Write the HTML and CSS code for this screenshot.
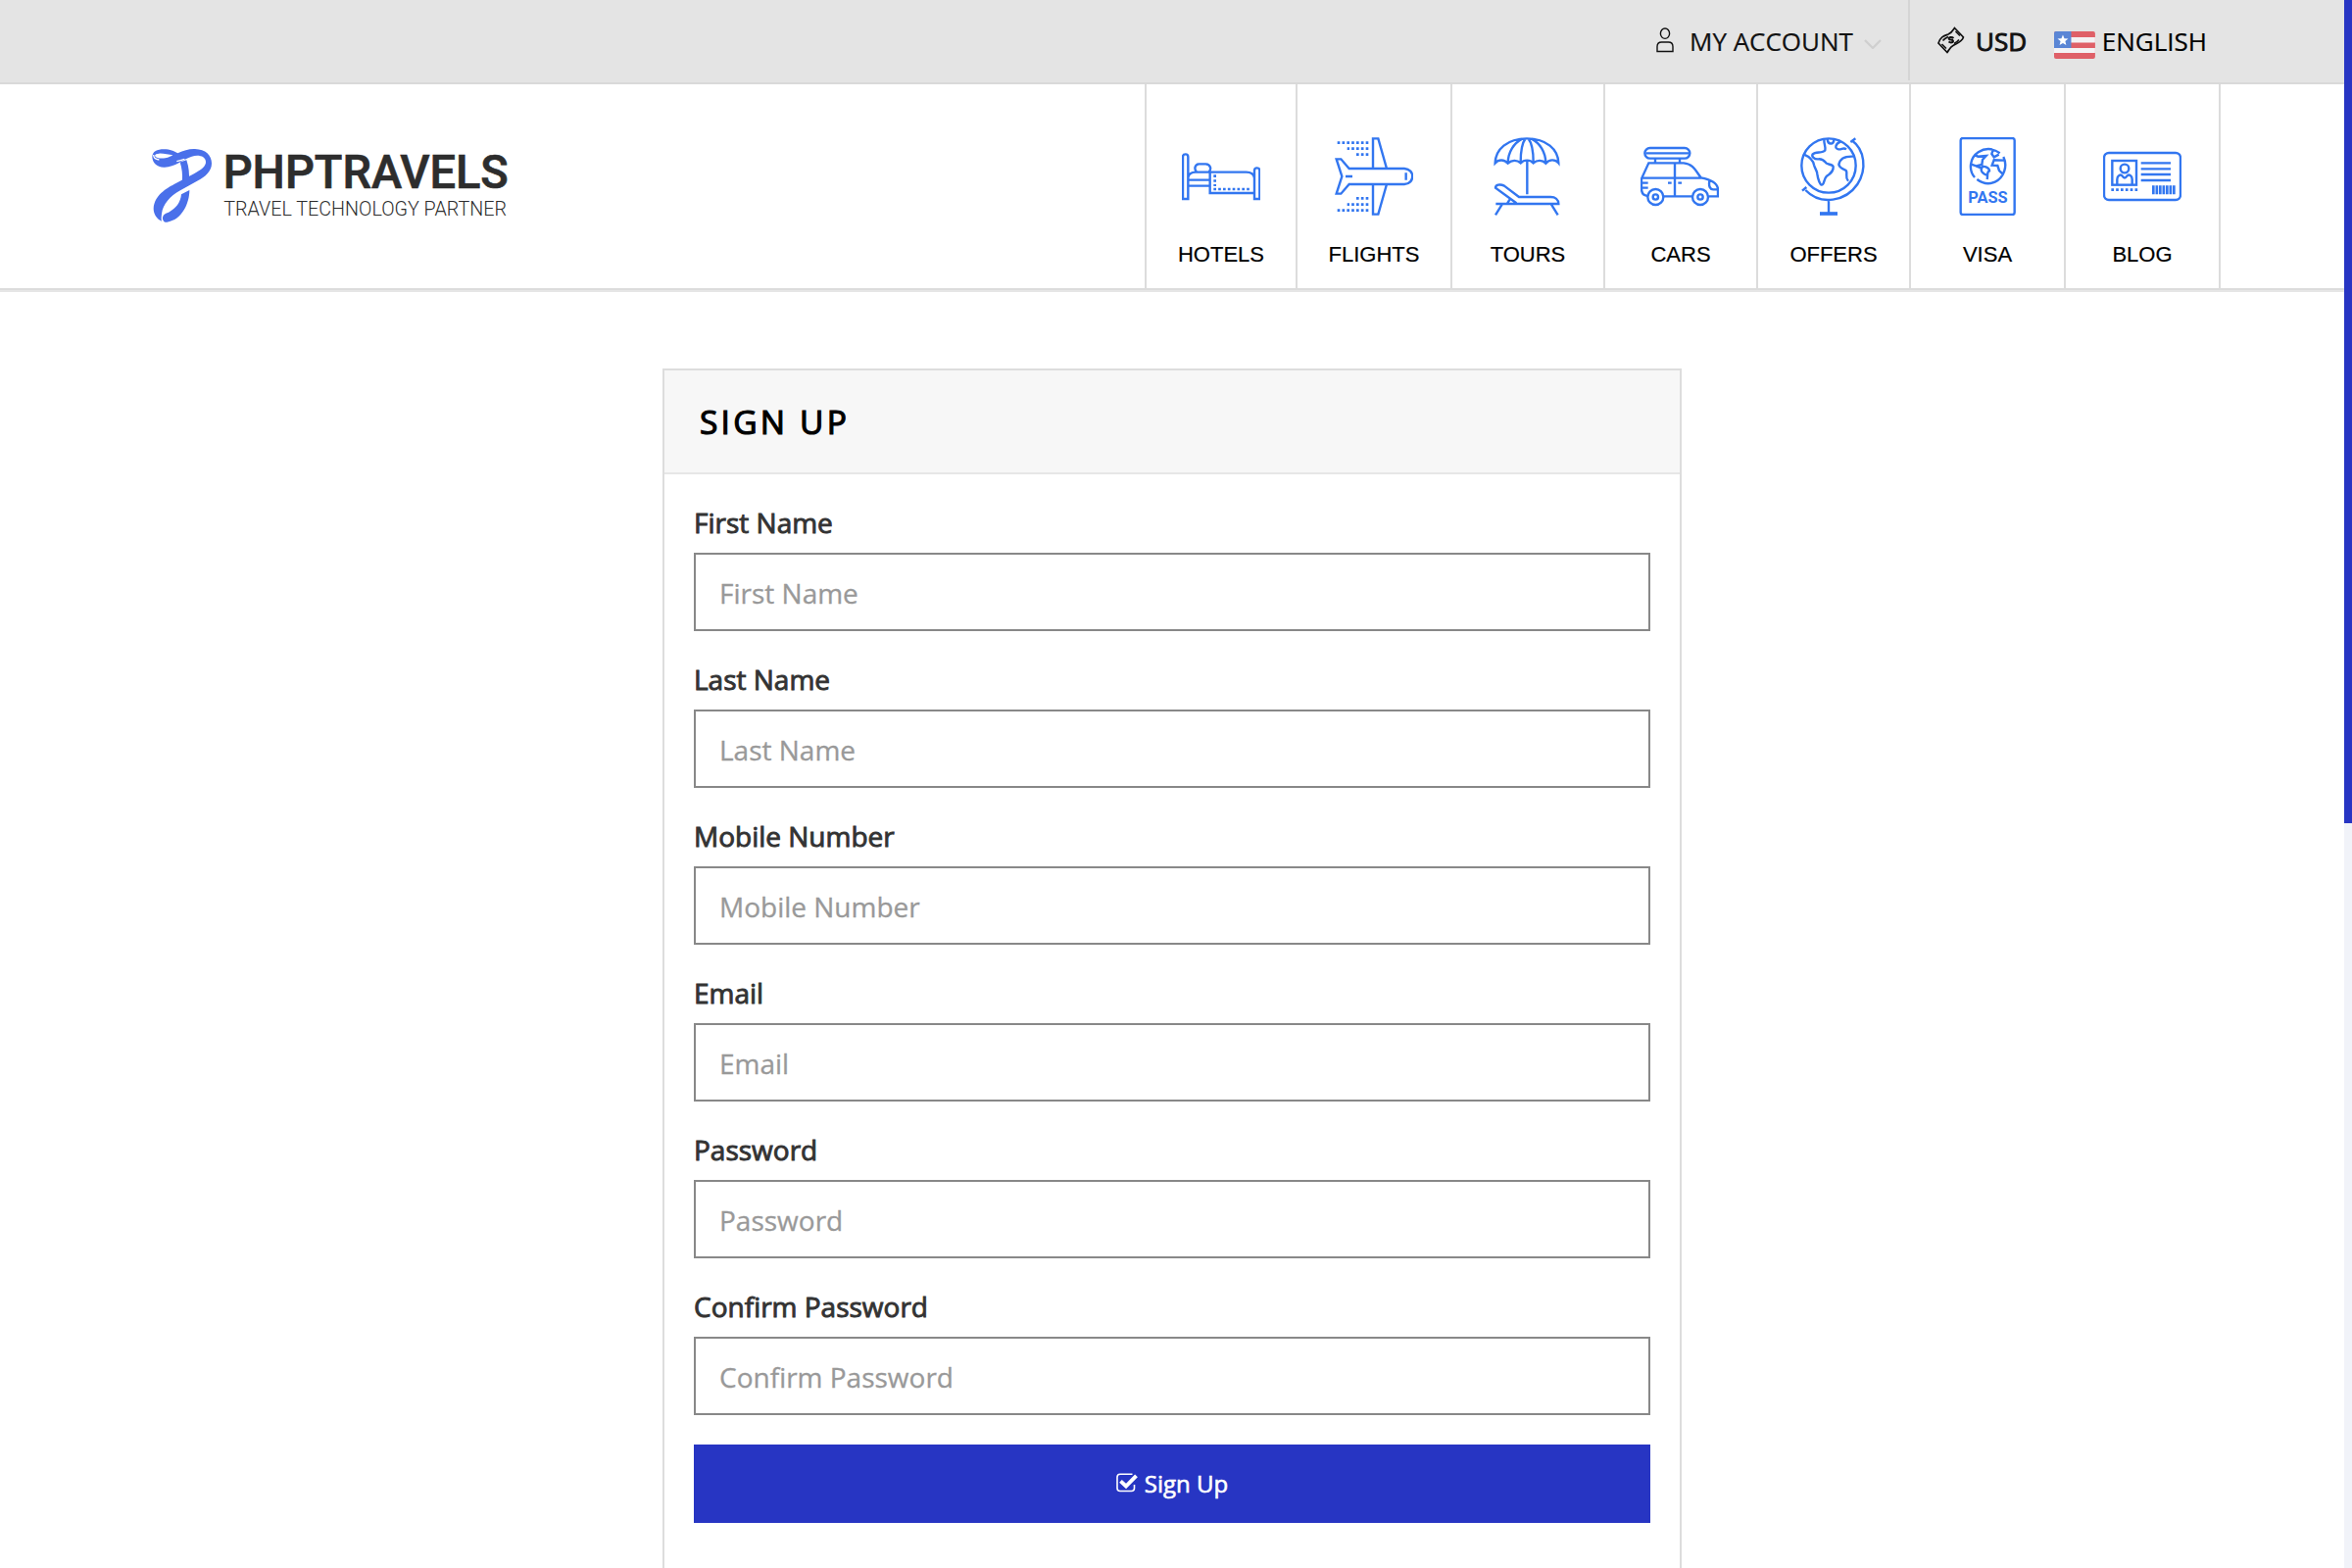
FILE: index.html
```html
<!DOCTYPE html>
<html lang="en">
<head>
<meta charset="utf-8">
<title>Sign Up - PHPTRAVELS</title>
<link rel="stylesheet" href="styles.css">
</head>
<body>
<div class="page">
  <div class="content">
    <div class="topbar">
      <a class="account">
        <svg class="icon-user" viewBox="0 0 18 26"><ellipse cx="9" cy="6.200" rx="4.600" ry="5.200"/><path d="M1 24.500v-5c0-3.200 1.500-4.500 4.500-4.500h7c3 0 4.500 1.300 4.500 4.500v5z"/></svg>
        <span>MY ACCOUNT</span>
        <svg class="icon-caret" viewBox="0 0 18 10"><path d="M1 1l8 8 8-8"/></svg>
      </a>
      <div class="locale">
        <svg class="icon-money" viewBox="0 0 28 28"><path d="M1 17C3 10.500 7 9.500 11 8C14.500 6.500 15.500 4.500 17.500 1.500L26.500 11C25 16 20 17 16 19.500C13 21 12 24 10 26.500Z"/><path d="M18.500 5L23 9.500M4.500 18L9 22.500M5.500 14.500C7 12.500 9 11.500 11 10.500M17 17.500C19 16.500 20.500 15.500 22 13.500" stroke-width="1.500"/><path d="M16.500 12C14.500 10 11 11 11.800 12.800C12.600 14.300 15.500 12.800 16 14.700C16.300 16.500 13.500 17 11.500 15.500" stroke-width="2"/></svg>
        <span class="currency">USD</span>
        <svg class="flag" viewBox="0 0 42 28"><rect width="42" height="28" rx="2" fill="#df6068"/><path fill="#f4f2f4" d="M17 6h25v5.500H17zM0 17h42v5H0z"/><path fill="#5b86d5" d="M2 0h15.500v17H0V2a2 2 0 0 1 2-2z"/><path fill="#fff" d="M9 3.500l1.500 3.800 4 .2-3.100 2.600 1 4L9 11.900l-3.400 2.200 1-4-3.100-2.600 4-.2z"/></svg>
        <span class="language">ENGLISH</span>
      </div>
    </div>

    <header class="header">
      <svg class="logo" viewBox="75 60 1110 240">
        <g fill="none" stroke="#4a70ea" stroke-linejoin="round">
          <path stroke-width="21" d="M171 103C178 124 180 142 178 166"/>
          <path stroke="none" fill="#4a70ea" d="M76 91C76 73 92 67 111 67C132 67 142 73 154 79C173 70 190 65 207 66C239 67 258 85 258 110C258 134 238 151 216 163L162 193C130 211 109 235 105 264C104 275 103 282 105 287C91 281 80 266 80 248C83 208 118 188 143 174L204 142C225 130 241 119 240 105C239 88 218 83 197 89C171 96 145 122 114 122C90 123 77 109 76 91ZM84 87C88 94 102 96 116 94C126 92 136 88 139 85C127 84 109 79 97 80C90 80 85 82 84 87Z"/>
          <path stroke="none" fill="#4a70ea" d="M190 192C190 231 168 283 121 290C112 291 107 284 108 275C110 266 117 263 126 260C148 249 163 230 165 205Z"/>
          <path stroke="#fff" stroke-width="4" d="M151 104Q162 101 175 97M80 84C80 93 87 98 97 99"/>
        </g>
        <text class="logo-name" x="293" y="187" textLength="873" lengthAdjust="spacingAndGlyphs">PHPTRAVELS</text>
        <text class="logo-tag" x="295" y="269" textLength="866" lengthAdjust="spacingAndGlyphs">TRAVEL TECHNOLOGY PARTNER</text>
      </svg>
      <nav class="nav">
        <a class="nav-item w-hotels">
          <svg class="nav-icon" viewBox="138 180 240 240"><path d="M141 369V240q0-8 8-8t8 8V369zM360 369V282q0-8 8-8t8 8V369zM157 311H224M157 329H224M157 304C159 292 168 287 180 287H335C350 287 358 293 360 305M224 287V351H360M183 286C175 278 177 263 190 262H211C227 263 229 279 220 287"/><path class="dots" d="M239 295V330M235 339H350"/></svg>
          <span>HOTELS</span>
        </a>
        <a class="nav-item w-flights">
          <svg class="nav-icon" viewBox="606 180 240 240"><path d="M650 276H819C852 278 852 322 819 324H650L625 353H611L628 300L611 247H625ZM723 276V184H739L765 276M723 324V416H739L765 324M824 289V311M639 300H660"/><path class="dots" d="M709 197H614M709 215H644M709 233H672M709 367H672M709 386H644M709 404H614"/></svg>
          <span>FLIGHTS</span>
        </a>
        <a class="nav-item w-mid">
          <svg class="nav-icon" viewBox="114 180 240 240"><path d="M137 259C138 217 174 184 234 184S330 217 331 259C321 247 303 247 292 260C282 249 265 249 254 259C244 248 225 248 215 259C204 249 188 249 176 260C165 248 148 247 137 259ZM176 258C177 226 194 198 220 185M215 257C215 222 221 196 230 184M238 184C248 196 254 222 254 257M248 185C274 198 291 226 292 258M235 252V355M139 384H331C331 371 321 363 307 363H210L165 329C151 322 138 326 138 335L202 382M174 383L182 370M158 386L138 418M309 386L329 418"/></svg>
          <span>TOURS</span>
        </a>
        <a class="nav-item w-mid">
          <svg class="nav-icon" viewBox="582 180 240 240"><rect x="595" y="213" width="138" height="32" rx="16"/><path d="M598 229H730M627 246V258M702 246V258M605 360C590 359 585 351 585 338V307L607 259H714C741 261 750 281 767 304C794 309 816 317 819 338V361H790M652 361H742M588 305H767M687 260V361M587 320H605M587 335H605M793 314C790 330 795 341 806 340H819M666 320H677M697 320H708"/><circle cx="628" cy="363" r="24"/><circle cx="628" cy="363" r="8"/><circle cx="765" cy="363" r="24"/><circle cx="765" cy="363" r="8"/></svg>
          <span>CARS</span>
        </a>
        <a class="nav-item w-mid">
          <svg class="nav-icon" viewBox="90 180 240 240"><circle cx="198" cy="267" r="83"/><path d="M265 195L280 184M269 190C308 218 316 278 286 324C251 376 174 391 127 342M117 344L130 333M198 373V412"/><path stroke-width="11" d="M171 414H225"/><path d="M121 232C140 240 150 249 153 265C156 277 162 280 163 293C165 309 172 326 177 326C184 326 183 308 192 299C207 290 213 280 212 270C210 263 196 264 190 259C184 252 180 246 167 247C153 248 145 239 149 232C158 223 180 230 187 220C190 209 183 204 184 187M194 186C196 204 213 204 214 187M235 193C218 200 215 215 228 217C239 218 243 210 252 217M273 239C250 238 232 245 229 264C233 278 245 276 252 283C256 294 247 301 258 314"/></svg>
          <span>OFFERS</span>
        </a>
        <a class="nav-item w-flights">
          <svg class="nav-icon" viewBox="564 180 240 240"><rect x="602" y="183" width="165" height="234" rx="7"/><path d="M645 303C625 280 630 243 656 226C681 210 704 216 722 229M733 240C747 269 734 304 707 317C689 325 668 321 652 309M646 235L655 239L680 237L669 249L667 264L649 268L632 262M649 268L666 275C670 263 690 274 690 283C681 286 686 295 683 309M666 275C662 285 672 292 682 296M701 219L697 231L704 241L719 233M735 251L704 250L698 266L715 267L720 282L731 293"/><text class="pass" x="625" y="381" textLength="121" lengthAdjust="spacingAndGlyphs">PASS</text></svg>
          <span>VISA</span>
        </a>
        <a class="nav-item w-blog">
          <svg class="nav-icon" viewBox="198 180 240 240"><rect x="201" y="228" width="234" height="144" rx="15"/><rect x="226" y="252" width="74" height="74"/><circle cx="264" cy="276" r="13"/><path d="M241 325V309C241 297 252 292 257 299Q264 310 271 299C277 292 287 298 287 309V325M314 259H405M314 277H405M314 294H405M314 312H405"/><path class="dots" d="M223 341H304"/><path class="bars" d="M348 341H419"/></svg>
          <span>BLOG</span>
        </a>
      </nav>
    </header>

    <main class="panel">
      <h1 class="panel-title">SIGN UP</h1>
      <form class="panel-body">
        <div class="field"><label for="first">First Name</label><input id="first" type="text" placeholder="First Name"></div>
        <div class="field"><label for="last">Last Name</label><input id="last" type="text" placeholder="Last Name"></div>
        <div class="field"><label for="mobile">Mobile Number</label><input id="mobile" type="text" placeholder="Mobile Number"></div>
        <div class="field"><label for="email">Email</label><input id="email" type="text" placeholder="Email"></div>
        <div class="field"><label for="password">Password</label><input id="password" type="password" placeholder="Password"></div>
        <div class="field"><label for="confirm">Confirm Password</label><input id="confirm" type="password" placeholder="Confirm Password"></div>
        <button class="submit" type="button">
          <svg class="icon-check" viewBox="0 0 22 20"><path stroke-width="1.600" d="M16.500 1.300H4A3 3 0 0 0 1 4.300V15.500a3 3 0 0 0 3 3H15.500a3 3 0 0 0 3-3V12"/><path stroke-width="3.900" d="M4.500 8.300L10 13.500 20.500 2.800"/></svg>
          <span>Sign Up</span>
        </button>
      </form>
    </main>
  </div>
  <div class="scroll-track"><div class="scroll-thumb"></div></div>
</div>
</body>
</html>
```

FILE: styles.css
```css
* { box-sizing: border-box; }

body {
  margin: 0;
  background: #fff;
  font-family: "Open Sans", sans-serif;
  color: #000;
}

.page {
  display: flex;
  height: 100vh;
  overflow: hidden;
}

.content {
  flex: 1;
  overflow: hidden;
}

.scroll-track {
  width: 8px;
  background: #f1f3f9;
}

.scroll-thumb {
  height: 840px;
  background: #2735c3;
}

.topbar {
  display: flex;
  justify-content: flex-end;
  height: 86px;
  padding-right: 140px;
  background: #e4e4e4;
  border-bottom: 2px solid #d9d9d9;
  font-size: 26px;
}

.account,
.locale {
  display: flex;
  align-items: center;
  height: 82px;
  white-space: nowrap;
}

.account span,
.locale span {
  padding-top: 2px;
  -webkit-text-stroke: 0.2px currentColor;
}

.account {
  width: 259px;
  border-right: 2px solid #d5d5d5;
  color: #111;
}

.account svg,
.icon-money,
.icon-check {
  fill: none;
  stroke: #111;
  stroke-width: 1.7;
}

.account .icon-user {
  width: 18px;
  height: 26px;
  margin-right: 16px;
  stroke-width: 1.4;
}

.account .icon-caret {
  width: 18px;
  height: 10px;
  margin: 8px 0 0 11px;
  stroke: #cfcfcf;
  stroke-width: 2.2;
}

.locale { width: 303px; padding-left: 28px; }

.icon-money {
  width: 28px;
  height: 28px;
  margin-right: 11px;
}

.locale .currency {
  width: 52px;
  color: #111;
  -webkit-text-stroke: 0.9px #111;
}

.flag {
  width: 42px;
  height: 28px;
  margin: 10px 7px 0 28px;
}

.header {
  display: flex;
  justify-content: space-between;
  height: 210px;
  padding: 0 126px 0 155px;
  border-bottom: 2px solid #dcdcdc;
  box-shadow: 0 2px 0 #e6e6e6;
}

.logo {
  width: 370px;
  height: 80px;
  margin-top: 64px;
  overflow: visible;
}

.logo-name {
  font: 500 144px Roboto, sans-serif;
  fill: #2d2d2d;
  stroke: #2d2d2d;
  stroke-width: 2;
}

.logo-tag {
  font: 300 62px Roboto, sans-serif;
  fill: #2d2d2d;
}

.nav {
  display: flex;
  border-right: 2px solid #dcdcdc;
}

.nav-item {
  display: flex;
  flex-direction: column;
  align-items: center;
  padding-top: 54px;
  border-left: 2px solid #dcdcdc;
  font: 22px/26px "Liberation Sans", Arial, sans-serif;
}

.nav-item span {
  margin-top: 27px;
  -webkit-text-stroke: 0.2px #000;
}

.w-hotels { width: 154px; }
.w-flights { width: 158px; }
.w-mid { width: 156px; }
.w-blog { width: 158px; }

.nav-icon {
  width: 80px;
  height: 80px;
  fill: none;
  stroke: #3276f0;
  stroke-width: 7.2;
}

.w-mid .nav-icon { margin-right: 2px; }

.nav-icon .dots {
  stroke-width: 8;
  stroke-dasharray: 8 6.5;
}

.nav-icon .bars {
  stroke-width: 27;
  stroke-dasharray: 8 2.5;
}

.nav-icon .pass {
  font: 700 50px Roboto, sans-serif;
  fill: #3276f0;
  stroke: none;
}

.panel {
  width: 1040px;
  height: 1300px;
  margin: 80px 0 0 676px;
  border: 2px solid #ddd;
}

.panel-title {
  height: 106px;
  margin: 0;
  padding: 0 36px;
  background: #f7f7f7;
  border-bottom: 2px solid #e6e6e6;
  font-size: 33.5px;
  font-weight: 400;
  line-height: 104px;
  letter-spacing: 3.2px;
  -webkit-text-stroke: 1.2px #000;
}

.panel-body { padding: 29px 30px; }

.field { margin-bottom: 29px; }

.field label {
  display: block;
  margin-bottom: 11px;
  color: #333;
  font-size: 28px;
  line-height: 40px;
  -webkit-text-stroke: 0.9px #333;
}

.field input {
  display: block;
  width: 100%;
  height: 80px;
  padding: 2px 24px 0;
  border: 2px solid #888;
  border-radius: 0;
  background: #fff;
  font: 28px "Open Sans", sans-serif;
}

.field input::placeholder {
  color: #999;
  -webkit-text-stroke: 0.3px #999;
}

.submit {
  display: flex;
  align-items: center;
  justify-content: center;
  gap: 7px;
  width: 100%;
  height: 80px;
  margin-top: 30px;
  padding: 0 0 2px;
  border: 0;
  background: #2735c3;
  color: #fff;
  font: 24px "Open Sans", sans-serif;
  -webkit-text-stroke: 0.6px #fff;
}

.icon-check {
  width: 22px;
  height: 20px;
  stroke: #fff;
}
```
